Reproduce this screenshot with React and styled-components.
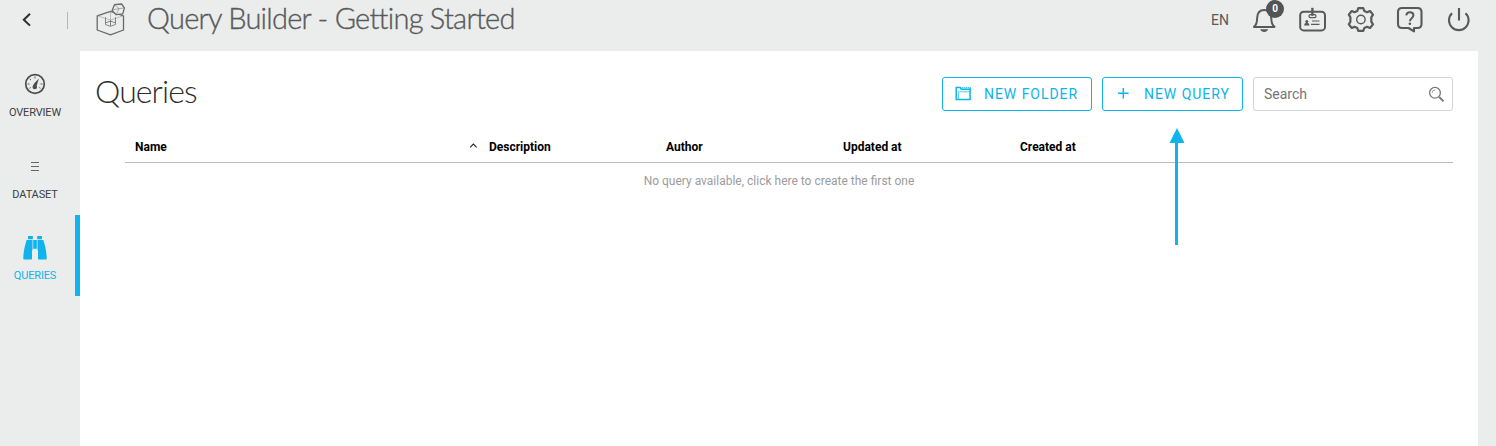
import React from 'react';
import styled, { createGlobalStyle } from 'styled-components';

const BLUE = '#0eb4ea';
const GREY = '#585a5a';

const GlobalStyle = createGlobalStyle`
  * { box-sizing: border-box; }
  body { margin: 0; background: #ebedec; font-family: Roboto, sans-serif; overflow: hidden; }
  svg { display: block; flex: none; }
`;

const Page = styled.div`
  position: relative;
  display: flex;
  flex-direction: column;
  width: 1496px;
  height: 446px;
  background: #ebedec;
  overflow: hidden;
`;

const TopBar = styled.header`
  display: flex;
  flex: none;
  height: 51px;
  padding: 0 25px 0 19px;
  align-items: flex-start;
`;

const BackButton = styled.button`
  display: flex;
  width: 16px;
  height: 16px;
  margin-top: 12px;
  padding: 0;
  border: 0;
  background: none;
`;

const Divider = styled.span`
  width: 1px;
  height: 17px;
  margin: 12px 28px 0 32px;
  background: #b4b6b5;
`;

const AppTitle = styled.h1`
  margin: 0 0 0 19px;
  padding-top: 1px;
  font: 300 29px/34px Lato, sans-serif;
  letter-spacing: -0.75px;
  -webkit-text-stroke: 0.35px ${GREY};
  color: ${GREY};
  white-space: nowrap;
`;

const Tools = styled.div`
  display: flex;
  align-items: center;
  height: 39px;
  margin-left: auto;
`;

const Language = styled.span`
  margin-right: 23px;
  font-size: 14px;
  line-height: 20px;
  color: ${GREY};
`;

const ToolIcon = styled.span`
  position: relative;
  display: flex;
  margin-left: ${(p) => p.$gap || 0}px;
`;

const Badge = styled.span`
  position: absolute;
  left: 14px;
  top: -6px;
  width: 18px;
  height: 18px;
  border-radius: 50%;
  background: #525454;
  color: #fff;
  font-size: 10px;
  font-weight: 700;
  line-height: 18px;
  text-align: center;
`;

const Body = styled.div`
  display: flex;
  flex: 1;
  padding-right: 18px;
`;

const Sidebar = styled.nav`
  width: 80px;
  padding-top: 2px;
`;

const NavItem = styled.a`
  display: flex;
  flex-direction: column;
  align-items: center;
  height: 81px;
  padding-right: ${(p) => (p.$active ? 5 : 10)}px;
  padding-top: ${(p) => p.$top}px;
  border-right: ${(p) => (p.$active ? `5px solid ${BLUE}` : '0')};
  color: ${(p) => (p.$active ? BLUE : '#3c3e3e')};
  font-size: 11px;
  line-height: 14px;
  letter-spacing: -0.15px;
  white-space: nowrap;
`;

const NavIcon = styled.span`
  display: flex;
  align-items: center;
  justify-content: center;
  height: 24px;
  margin-bottom: ${(p) => p.$gap || 9}px;
`;

const Panel = styled.main`
  flex: 1;
  padding: 24px 25px 0 16px;
  background: #fff;
`;

const PanelHeader = styled.div`
  display: flex;
  height: 38px;
  align-items: flex-start;
`;

const Heading = styled.h2`
  margin: -3px auto 0 -1px;
  font: 300 32px/38px Lato, sans-serif;
  letter-spacing: -0.9px;
  color: #2e2e2e;
`;

const ActionButton = styled.button`
  display: flex;
  align-items: center;
  width: ${(p) => p.$width}px;
  height: 34px;
  margin: 2px 10px 0 0;
  padding: 0 0 0 12px;
  border: 1px solid ${BLUE};
  border-radius: 3px;
  background: #fff;
  color: ${BLUE};
  font: 400 14px/20px Roboto, sans-serif;
  letter-spacing: 0.95px;
  white-space: nowrap;

  svg { margin-right: ${(p) => p.$gap}px; margin-bottom: 2px; }
`;

const SearchBox = styled.div`
  display: flex;
  align-items: center;
  justify-content: space-between;
  width: 200px;
  height: 34px;
  margin-top: 2px;
  padding: 0 7px 0 10px;
  border: 1px solid #d4d4d4;
  border-radius: 3px;
  color: #757575;
  font-size: 14px;
`;

const Table = styled.section`
  margin: 19px 0 0 29px;
`;

const HeadRow = styled.div`
  display: grid;
  grid-template-columns: 354px 177px 177px 177px 1fr;
  height: 31px;
  border-bottom: 1px solid #bcbcbc;
`;

const HeadCell = styled.div`
  display: flex;
  justify-content: space-between;
  padding: 7px 1px 0 10px;
  color: #000;
  font-size: 12px;
  font-weight: 700;
  line-height: 16px;
`;

const EmptyMessage = styled.div`
  padding: 10px 20px 0 0;
  color: #9c9c9c;
  font-size: 12px;
  line-height: 17px;
  text-align: center;
`;

const Pointer = styled.svg`
  position: absolute;
  left: 1169px;
  top: 128px;
`;

const BoxLogo = () => (
  <svg width="32" height="38" viewBox="0 0 32 38" fill="none" stroke="#686a6a" strokeLinejoin="round">
    <path d="M1.2 15.8 14.5 11.3 27.5 15.8V30L14.5 34.8 1.2 30Z" strokeWidth="1.3" />
    <path d="M1.2 15.8 14.5 20 27.5 15.8M14.5 11.5V20" strokeWidth=".6" stroke="#9b9d9c" />
    <path d="M9.5 17.3v7.2l5 1.8 5-1.8v-7.2M14.5 20v6M9.5 22.8l5-1.6 5 1.6" strokeWidth=".8" />
    <path d="m18.5 4.7 7-.7 2.9 3.8-1.6 6-6.7.9-4-4.3Z" strokeWidth="1.3" fill="#ebedec" />
    <path d="m16.3 10 6.7-1.4L28.2 8M23 8.6l-2.7 5.8M23 8.6l-4.2-3.7" strokeWidth=".5" />
  </svg>
);

const Bell = () => (
  <svg width="26" height="28" viewBox="0 0 26 28" fill="none" stroke={GREY} strokeWidth="2">
    <path d="M2 20.9c2.5-2 3.1-4.4 3.1-8.4 0-5.3 2.6-8.6 7.1-8.6s7.1 3.3 7.1 8.6c0 4 .7 6.4 3.2 8.4Z" strokeLinejoin="round" />
    <path d="M8.2 23.3h8c-.7 2-2.1 2.7-4 2.7s-3.3-.7-4-2.7Z" fill={GREY} stroke="none" />
  </svg>
);

const IdCard = () => (
  <svg width="28" height="26" viewBox="0 0 28 26" fill="none" stroke={GREY}>
    <rect x="1.2" y="4.8" width="24.8" height="18.6" rx="3.5" strokeWidth="2" />
    <path d="M13.4 .8v8" strokeWidth="2.4" />
    <rect x="10" y="7.6" width="7" height="3" rx="1.4" strokeWidth="1.2" />
    <path d="M13 14h7.5M12 17.4h8.5" strokeWidth="1.1" />
    <circle cx="7.8" cy="14.4" r="1.5" fill={GREY} stroke="none" />
    <path d="M5.2 18.6c0-2 .8-2.8 2.6-2.8s2.6.8 2.6 2.8Z" fill={GREY} stroke="none" />
  </svg>
);

const Gear = () => (
  <svg width="28" height="28" viewBox="0 0 28 28" fill="none" stroke={GREY} strokeWidth="2.2" strokeLinejoin="round">
    <path d="M11.3 2.2h5l1 2.8 2.8 1.2L23 5l3 3.6-1.7 2.7v4.4l1.7 2.7-3 3.6-2.9-1.2-2.8 1.2-1 2.8h-5l-1-2.8-2.8-1.2L4.8 22l-3-3.6 1.6-2.7v-4.4L1.8 8.6l3-3.6 2.7 1.2L10.3 5Z" />
    <circle cx="13.9" cy="13.5" r="4.2" strokeWidth="1.4" />
  </svg>
);

const Help = () => (
  <svg width="28" height="28" viewBox="0 0 28 28" fill="none" stroke={GREY}>
    <path d="M6 2h15.5q4 0 4 4v12q0 4-4 4h-3.5v3.4L12.5 22H6q-4 0-4-4V6q0-4 4-4Z" strokeWidth="2.1" strokeLinejoin="round" />
    <path d="M10.3 9.3c.3-2 1.5-3 3.5-3 2.2 0 3.6 1.1 3.6 3 0 2.9-3.5 2.9-3.5 6" strokeWidth="2" />
    <circle cx="13.9" cy="17.8" r="1.3" fill={GREY} stroke="none" />
  </svg>
);

const Power = () => (
  <svg width="24" height="26" viewBox="0 0 24 26" fill="none" stroke={GREY} strokeWidth="2.1">
    <path d="M12 1v12.6M5.1 6.2C2.8 8.2 2 10.7 2 13.3a9.8 9.8 0 0 0 19.6 0c0-2.6-.8-5.1-3.1-7.1" />
  </svg>
);

const Gauge = () => (
  <svg width="22" height="22" viewBox="0 0 22 22" fill="none" stroke="#4b4d4d">
    <circle cx="11" cy="11" r="9.3" strokeWidth="1.7" />
    <path d="M11 3.5v2M3.5 11h2M16.5 11h2M5.7 5.8l1.3 1.3M5.5 15.3l1.2-.8M16.5 15.3l-1.2-.8" strokeWidth=".9" />
    <path d="m14.9 5.5-2.2 7.2-3.5-1.2Z" fill="#4b4d4d" stroke="none" />
    <circle cx="10.8" cy="14" r="2.3" fill="#4b4d4d" stroke="none" />
  </svg>
);

const Lines = () => (
  <svg width="8" height="10" viewBox="0 0 8 10" stroke="#666868" strokeWidth="1">
    <path d="M0 .5h8M0 4.5h8M0 8.5h8" />
  </svg>
);

const Binoculars = () => (
  <svg width="24" height="24" viewBox="0 0 24 24" fill={BLUE}>
    <path d="M5 0h4.8v3.2H5ZM14.2 0H19v3.2h-4.8Z" />
    <path d="M3.6 4H9.5v9.6L9 14.8v7.7q0 .9-.9.9H1.2q-.9 0-.9-.9C.3 15 2.2 9 3.6 4Z" />
    <path d="M20.4 4h-5.9v9.6l.5 1.2v7.7q0 .9.9.9h6.9q.9 0 .9-.9C23.7 15 21.8 9 20.4 4Z" />
    <path d="M10.2 4h3.6v8.8h-3.6Z" />
  </svg>
);

const Folder = () => (
  <svg width="17" height="15" viewBox="0 0 17 15" fill="none" stroke={BLUE}>
    <path d="M1.2 13.4V1.4h4l1 1.8h8.9v10.2Z" strokeWidth="1.5" />
    <path d="M3.6 13V5.8h11.5" strokeWidth=".7" />
    <path d="M6.6 1.7h9.1" strokeWidth="1.1" strokeDasharray="1.5 .6" />
    <path d="M15.3 1.5v3" strokeWidth="1" />
  </svg>
);

const Plus = () => (
  <svg width="17" height="12" viewBox="0 0 17 12" stroke={BLUE} strokeWidth="1.5">
    <path d="M3 6.2h10.6M8.3 1v10.4" />
  </svg>
);

const Magnifier = () => (
  <svg width="17" height="17" viewBox="0 0 17 17" fill="none" stroke="#777">
    <circle cx="7" cy="6.8" r="5.4" strokeWidth="1.3" />
    <path d="M4.2 6.8A2.8 2.8 0 0 1 7 4" strokeWidth=".7" />
    <path d="m11.2 11 4.3 4.3" strokeWidth="1.9" />
  </svg>
);

const columns = ['Name', 'Description', 'Author', 'Updated at', 'Created at'];

export default function App() {
  return (
    <Page>
      <GlobalStyle />
      <TopBar>
        <BackButton aria-label="Back">
          <svg width="16" height="16" viewBox="0 0 16 16" fill="none" stroke="#2c2e2e" strokeWidth="2">
            <path d="M11 1.8 4.8 7.7 11 13.6" />
          </svg>
        </BackButton>
        <Divider />
        <BoxLogo />
        <AppTitle>Query Builder - Getting Started</AppTitle>
        <Tools>
          <Language>EN</Language>
          <ToolIcon><Bell /><Badge>0</Badge></ToolIcon>
          <ToolIcon $gap={21}><IdCard /></ToolIcon>
          <ToolIcon $gap={20}><Gear /></ToolIcon>
          <ToolIcon $gap={21}><Help /></ToolIcon>
          <ToolIcon $gap={23}><Power /></ToolIcon>
        </Tools>
      </TopBar>
      <Body>
        <Sidebar>
          <NavItem $top={19}><NavIcon $gap={10}><Gauge /></NavIcon>OVERVIEW</NavItem>
          <NavItem $top={21}><NavIcon><Lines /></NavIcon>DATASET</NavItem>
          <NavItem $top={21} $active><NavIcon><Binoculars /></NavIcon>QUERIES</NavItem>
        </Sidebar>
        <Panel>
          <PanelHeader>
            <Heading>Queries</Heading>
            <ActionButton $width={150} $gap={12}><Folder />NEW FOLDER</ActionButton>
            <ActionButton $width={141} $gap={12}><Plus />NEW QUERY</ActionButton>
            <SearchBox>Search<Magnifier /></SearchBox>
          </PanelHeader>
          <Table>
            <HeadRow>
              {columns.map((name, i) => (
                <HeadCell key={name}>
                  {name}
                  {i === 0 && (
                    <svg width="9" height="14" viewBox="0 0 9 14" fill="none" stroke="#222" strokeWidth="1.1">
                      <path d="m1.2 8.3 3.2-3.2 3.2 3.2" />
                    </svg>
                  )}
                </HeadCell>
              ))}
            </HeadRow>
            <EmptyMessage>No query available, click here to create the first one</EmptyMessage>
          </Table>
        </Panel>
      </Body>
      <Pointer width="16" height="117" viewBox="0 0 16 117" fill={BLUE}>
        <path d="M8 0 15.5 15H9v102H6V15H.5Z" />
      </Pointer>
    </Page>
  );
}
